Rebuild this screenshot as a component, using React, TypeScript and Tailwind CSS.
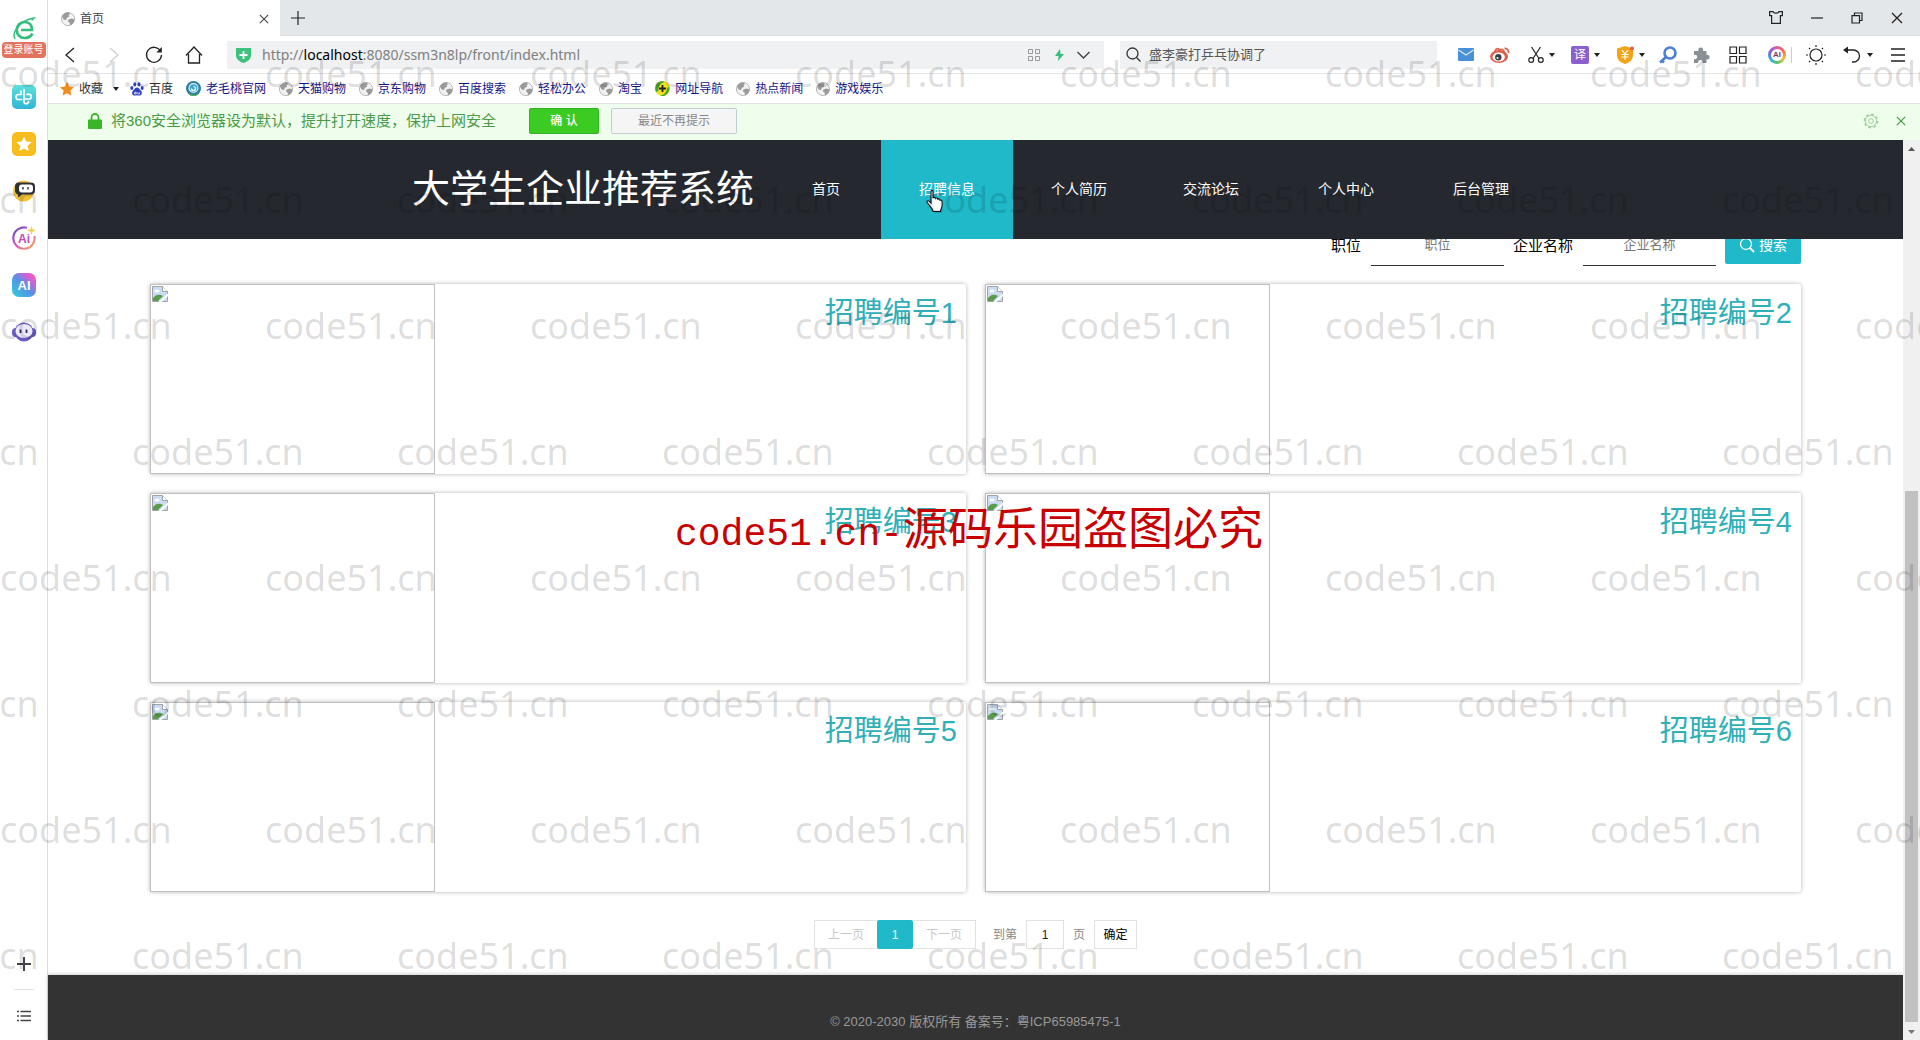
import { useState } from "react";
import type { ReactNode } from "react";

const menus = [["首页"], ["招聘信息", "个人简历", "交流论坛"], ["个人中心"], ["后台管理"]];

const jobs = [1, 2, 3, 4, 5, 6];

const bookmarks = [
  { name: "百度", icon: "paw" },
  { name: "老毛桃官网", icon: "peach" },
  { name: "天猫购物", icon: "globe" },
  { name: "京东购物", icon: "globe" },
  { name: "百度搜索", icon: "globe" },
  { name: "轻松办公", icon: "globe" },
  { name: "淘宝", icon: "globe" },
  { name: "网址导航", icon: "nav" },
  { name: "热点新闻", icon: "globe" },
  { name: "游戏娱乐", icon: "globe" },
];

type IconProps = { w: number; h?: number; box?: string; children: ReactNode };

function Svg({ w, h, box, children }: IconProps) {
  return (
    <svg width={w} height={h ?? w} viewBox={box ?? `0 0 ${w} ${h ?? w}`} fill="none" className="block shrink-0" aria-hidden="true">
      {children}
    </svg>
  );
}

function Globe() {
  return (
    <Svg w={14}>
      <circle cx="7" cy="7" r="6.6" fill="#f2f2f2" stroke="#a8a8a8" strokeWidth=".8" />
      <path d="M1 4.5C2.2 1.8 4.6.6 7.2.5L9 2 7.6 3.4l.6 1.4-2.4 1L5 8 2.6 7.4z" fill="#9a9a9a" />
      <path d="M7.4 7.6l3.4-1 2.6 1c-.2 3-2 5-4.4 5.7L8.6 10.6 7 9.4z" fill="#9a9a9a" />
    </Svg>
  );
}

function BookmarkIcon({ icon }: { icon: string }) {
  if (icon === "paw") {
    return (
      <Svg w={14}>
        <g fill="#2f3fc4">
          <ellipse cx="1.8" cy="6" rx="1.5" ry="2" />
          <ellipse cx="4.8" cy="2.4" rx="1.5" ry="2.1" />
          <ellipse cx="9" cy="2.4" rx="1.5" ry="2.1" />
          <ellipse cx="12.2" cy="6" rx="1.5" ry="2" />
          <path d="M7 5.6c1.8 0 2.4 1.8 3.8 3 1.6 1.4 1.4 4.8-1 5-1.2.1-1.8-.4-2.8-.4s-1.6.5-2.8.4c-2.4-.2-2.6-3.6-1-5C4.6 7.4 5.2 5.6 7 5.600z" />
        </g>
        <path d="M4.6 10.2h1.6v1.8H4.6zM7.8 10.2v1.8h1.8v-1.8" stroke="#fff" strokeWidth=".7" />
      </Svg>
    );
  }
  if (icon === "peach") {
    return (
      <Svg w={15}>
        <circle cx="7.5" cy="7.5" r="7.5" fill="#2a7fa0" />
        <circle cx="7.5" cy="7" r="4.4" fill="#3fa3c4" stroke="#d3eff6" strokeWidth="1.3" />
        <path d="M5.5 7.500a2 2 0 1 0 2-2" stroke="#fff" strokeWidth="1.2" />
        <path d="M3 13c2.400 1.800 6.600 1.800 9 0" stroke="#4fae5a" strokeWidth="1.4" />
      </Svg>
    );
  }
  if (icon === "nav") {
    return (
      <Svg w={15}>
        <circle cx="7.5" cy="7.5" r="7.5" fill="#f3df1e" />
        <path d="M1 11A7.5 7.5 0 0 1 7 0l3 1C5 2 3 6 3.5 10zM14 5a7.500 7.500 0 0 1-7 10l-2-.6c4-.4 6.5-3 7-7z" fill="#46a52c" />
        <path d="M7.5 4v7M4 7.5h7" stroke="#222" strokeWidth="1.8" />
      </Svg>
    );
  }
  return <Globe />;
}

function Caret() {
  return (
    <Svg w={6} h={4}>
      <path d="M0 0h6L3 4z" fill="#222" />
    </Svg>
  );
}

function Cross({ size, color }: { size: number; color: string }) {
  return (
    <Svg w={size} box="0 0 12 12">
      <path d="M1 1l10 10M11 1L1 11" stroke={color} strokeWidth="1.3" />
    </Svg>
  );
}

function BrokenImage() {
  return (
    <svg width="16" height="16" viewBox="0 0 16 16" className="m-px block" aria-hidden="true">
      <path d="M.5.5h10l5 5v10H.5z" fill="#c9dcf4" stroke="#a0a4a8" />
      <path d="M10.5.5v5h5" fill="#fff" stroke="#a0a4a8" />
      <ellipse cx="5" cy="5" rx="2.6" ry="1.5" fill="#fff" />
      <path d="M1 15v-3c2-3 5-4 8-3l2 1-5 5z" fill="#5a9c4c" />
      <path d="M6.5 16L16 7.5V10L9.5 16z" fill="#fff" />
    </svg>
  );
}

function Sidebar() {
  return (
    <aside className="flex w-12 shrink-0 flex-col items-center border-r border-[#dcdfe1] bg-white pt-4">
      <Svg w={24}>
        <path d="M20.500 17.500C19 20.300 16.200 22 12.800 22 8 22 4.800 18.600 4.800 14S8.200 6 12.800 6c4.400 0 7.400 3.200 7.200 8H9" stroke="#35bd7c" strokeWidth="2.700" />
        <path d="M3 23C-.5 17 7 4.500 22 2c-1 .8-1.500 1.400-2 2.500" stroke="#35bd7c" strokeWidth="1.500" />
      </Svg>
      <button className="mt-[2px] h-4 w-11 rounded-sm bg-[#e2735c] text-[10px] leading-4 text-white">登录账号</button>
      <nav className="mt-[27px] flex flex-col gap-[23px]" aria-label="侧栏">
        <Svg w={24}>
          <defs>
            <linearGradient id="sky" x1="0" y1="0" x2="0" y2="1">
              <stop stopColor="#5fe0dc" />
              <stop offset="1" stopColor="#2eb4d8" />
            </linearGradient>
            <linearGradient id="ring" x1="0" y1="0" x2="1" y2="1">
              <stop stopColor="#5e4fc4" />
              <stop offset=".5" stopColor="#d658c8" />
              <stop offset="1" stopColor="#f5b84a" />
            </linearGradient>
            <linearGradient id="mix" x1="0" y1="1" x2="1" y2="0">
              <stop stopColor="#2fd0dc" />
              <stop offset=".5" stopColor="#5a8fe6" />
              <stop offset=".8" stopColor="#e25bd0" />
              <stop offset="1" stopColor="#ff5ba8" />
            </linearGradient>
          </defs>
          <rect width="24" height="24" rx="5" fill="url(#sky)" />
          <path d="M12 4.500v12c0 3 4.500 3 4.500 0M9.500 14.500H6.500a2.500 2.500 0 0 1 0-5H9M12 14h5a2.300 2.300 0 0 0 0-4.600h-2M9 6v3.500" stroke="#fff" strokeWidth="1.700" strokeLinecap="round" />
        </Svg>
        <Svg w={24}>
          <rect width="24" height="24" rx="5" fill="#f6bd1c" />
          <path d="M12 4.5l2.3 5 5.4.6-4 3.7 1.1 5.3L12 16.4l-4.8 2.7 1.1-5.3-4-3.7 5.4-.6z" fill="#fff" />
        </Svg>
        <Svg w={24}>
          <circle cx="11.5" cy="12" r="10.5" fill="#f3c034" />
          <path d="M6 3.500h13a4 4 0 0 1 4 4v4a4 4 0 0 1-4 4h-9l-4 3v-3a4 4 0 0 1-3-4v-4a4 4 0 0 1 3-4z" fill="#2e3138" />
          <rect x="7" y="5.5" width="14" height="8" rx="3" fill="#fff" />
          <path d="M11 8v2.5M16 8v2.5" stroke="#2e3138" strokeWidth="1.4" />
        </Svg>
        <Svg w={24}>
          <path d="M15 1.8A10.7 10.7 0 1 0 22.5 10" stroke="url(#ring)" strokeWidth="2.2" />
          <path d="M19.5 0l1.2 3.3L24 4.500l-3.300 1.200L19.500 9l-1.200-3.300L15 4.500l3.300-1.200z" fill="#f4cf58" />
          <text x="12" y="16.5" textAnchor="middle" fontSize="12" fontWeight="700" fill="#c24bb0" fontFamily="Liberation Sans, sans-serif">Ai</text>
        </Svg>
        <Svg w={24}>
          <rect width="24" height="24" rx="7" fill="url(#mix)" />
          <text x="12" y="16.5" textAnchor="middle" fontSize="13" fontWeight="700" fill="#fff" fontFamily="Liberation Sans, sans-serif">AI</text>
        </Svg>
        <Svg w={24}>
          <circle cx="12" cy="12" r="9.5" fill="#6a5bc4" />
          <rect x="0" y="8" width="24" height="9" rx="4" fill="#6a5bc4" />
          <ellipse cx="12" cy="11" rx="8.5" ry="7" fill="#eeeafc" />
          <path d="M8.5 9.5v3.5M14.5 9.5v3.5" stroke="#33305a" strokeWidth="1.8" />
        </Svg>
      </nav>
      <div className="mt-auto flex flex-col items-center pb-[18px]">
        <Svg w={14}>
          <path d="M7 0v14M0 7h14" stroke="#444" strokeWidth="2" />
        </Svg>
        <hr className="mt-[18px] w-5 border-[#e2e2e2]" />
        <div className="mt-5">
          <Svg w={14} h={12}>
            <path d="M3.5 1.5H14M3.5 6H14M3.5 10.5H14M0 1.5h2M0 6h2M0 10.5h2" stroke="#444" strokeWidth="1.6" />
          </Svg>
        </div>
      </div>
    </aside>
  );
}

function TabStrip() {
  return (
    <div className="flex h-9 items-center border-b border-[#dcdfe1] bg-[#e3e7ea]">
      <div className="flex h-9 w-[232px] items-center bg-white pt-[2px] pr-[11px] pl-[13px] text-xs text-[#444]">
        <Globe />
        <span className="ml-[5px]">首页</span>
        <button className="ml-auto" aria-label="关闭标签">
          <Cross size={10} color="#444" />
        </button>
      </div>
      <button className="ml-[11px]" aria-label="新标签">
        <Svg w={14}>
          <path d="M7 0v14M0 7h14" stroke="#222" strokeWidth="1.2" />
        </Svg>
      </button>
      <div className="ml-auto flex items-center gap-7 pr-[17px]">
        <Svg w={14} h={13}>
          <path d="M.6.6h3.400c.5 2 5.500 2 6 0h3.400v4h-2v7.800H2.600V4.600h-2z" stroke="#222" strokeWidth="1.2" />
        </Svg>
        <Svg w={12}>
          <path d="M0 6h12" stroke="#222" strokeWidth="1.2" />
        </Svg>
        <Svg w={12}>
          <path d="M1 3.600h7.500V11H1zM3.500 3.600V1H11v7.500H8.500" stroke="#222" strokeWidth="1.2" />
        </Svg>
        <Cross size={12} color="#222" />
      </div>
    </div>
  );
}

function ToolIcons() {
  return (
    <div className="flex items-center pr-[14px] pl-[21px]">
      <Svg w={16} h={13}>
        <rect width="16" height="13" rx="1" fill="#4a90d9" />
        <path d="M.5 2L8 7l7.5-5" stroke="#d8e9fa" strokeWidth="1.3" />
      </Svg>
      <div className="ml-4">
        <Svg w={20} h={16}>
          <ellipse cx="9" cy="9.5" rx="9" ry="6.5" fill="#dd5f4b" />
          <ellipse cx="8.7" cy="10" rx="6.2" ry="4.5" fill="#fff" />
          <circle cx="8.3" cy="10.3" r="3.2" fill="#3a3f45" />
          <circle cx="7.5" cy="11" r="1" fill="#fff" />
          <path d="M5 4c1-3 4-3 4-1 2-1 5-1 5 2M14.5 1.5c2.5-.5 4.5 2 4 4.5" stroke="#dd5f4b" strokeWidth="1.8" />
        </Svg>
      </div>
      <div className="ml-[18px]">
        <Svg w={16}>
          <path d="M3.5 0l7.5 11.5M12.5 0L5 11.5" stroke="#222" strokeWidth="1.2" />
          <circle cx="3.2" cy="13" r="2.4" stroke="#222" strokeWidth="1.2" />
          <circle cx="12.8" cy="13" r="2.4" stroke="#222" strokeWidth="1.2" />
        </Svg>
      </div>
      <div className="ml-[5px]"><Caret /></div>
      <span className="ml-4 h-[18px] w-[18px] rounded-xs bg-[#8b5fd0] text-center text-xs leading-[18px] text-white">译</span>
      <div className="ml-[5px]"><Caret /></div>
      <div className="ml-4">
        <Svg w={18}>
          <path d="M9 0l8 2.5V9c0 4.500-3 7.500-8 9-5-1.500-8-4.500-8-9V2.500z" fill="#f2a516" />
          <path d="M6 4l3 4 3-4M5.500 8.500h7M5.500 11h7M9 8v6" stroke="#fff" strokeWidth="1.2" />
          <circle cx="16" cy="2.500" r="2" fill="#e8584a" />
        </Svg>
      </div>
      <div className="ml-[5px]"><Caret /></div>
      <div className="ml-[14px]">
        <Svg w={18}>
          <circle cx="11" cy="7" r="5.5" stroke="#4a80d8" strokeWidth="2.6" />
          <path d="M7 11l-6 5.5M3 14.500l2 2" stroke="#4a80d8" strokeWidth="2.6" />
        </Svg>
      </div>
      <div className="ml-4">
        <Svg w={18}>
          <path d="M1 5h4.500a2.500 2.500 0 1 1 4.500 0H13.500v4a2.300 2.300 0 1 1 0 4.300V17h-4a2.300 2.300 0 1 0-4.300 0H1v-4.200a2.200 2.200 0 1 0 0-3.800z" fill="#8a8f94" />
        </Svg>
      </div>
      <div className="ml-[18px]">
        <Svg w={18}>
          <path d="M1 1h6.500v6.500H1zM10.500 1H17v6.500h-6.500zM1 10.500h6.500V17H1zM10.500 10.500H17V17h-6.500z" stroke="#222" strokeWidth="1.2" />
        </Svg>
      </div>
      <span className="ml-[21px] flex h-[18px] w-[18px] items-center justify-center rounded-full bg-[conic-gradient(#e35aa8,#f2704a,#f2c23a,#4cc46a,#3aa8e8,#8a5ae0,#e35aa8)]">
        <span className="h-3 w-3 rounded-full bg-white text-center text-[8px] leading-3 font-bold text-[#7a3a6a]">AI</span>
      </span>
      <span className="ml-[5px] h-4 w-px bg-[#ccc]" />
      <div className="ml-[14px]">
        <Svg w={20}>
          <circle cx="10" cy="10" r="6" stroke="#222" strokeWidth="1.2" />
          <path d="M10 0v2M10 18v2M0 10h2M18 10h2M3 3l1.200 1.200M15.800 15.800L17 17M17 3l-1.200 1.200M3 17l1.200-1.200" stroke="#222" strokeWidth="1.2" />
        </Svg>
      </div>
      <div className="ml-[17px]">
        <Svg w={18}>
          <path d="M3 4h7.500a6 6 0 0 1 0 12H9" stroke="#222" strokeWidth="1.3" />
          <path d="M0 4l5-3.500v7z" fill="#222" />
        </Svg>
      </div>
      <div className="ml-[6px]"><Caret /></div>
      <div className="ml-[17px]">
        <Svg w={16} h={14}>
          <path d="M1 1h14M1 7h14M1 13h14" stroke="#222" strokeWidth="1.3" />
        </Svg>
      </div>
    </div>
  );
}

function AddressBar() {
  return (
    <div className="flex h-[38px] items-center border-b border-[#e6e6e6] bg-white pl-[15px]">
      <Svg w={14} h={16}>
        <path d="M11 1L3 8l8 7" stroke="#222" strokeWidth="1.3" />
      </Svg>
      <div className="ml-[30px]">
        <Svg w={14} h={16}>
          <path d="M3 1l8 7-8 7" stroke="#d0d0d0" strokeWidth="1.3" />
        </Svg>
      </div>
      <div className="ml-6">
        <Svg w={18}>
          <path d="M15.500 5A7.500 7.500 0 1 0 16.500 9" stroke="#222" strokeWidth="1.3" />
          <path d="M16.800 1v5.500h-5.500z" fill="#222" />
        </Svg>
      </div>
      <div className="ml-[22px]">
        <Svg w={18}>
          <path d="M1 9.500L9 1l8 8.500M3.500 8v9h11V8" stroke="#222" strokeWidth="1.3" />
        </Svg>
      </div>
      <div className="ml-6 flex h-7 flex-1 items-center bg-[#eff1f2] pr-[14px] pl-[9px]">
        <Svg w={15} h={16}>
          <path d="M0 1h15v7c0 4-3 6.500-7.500 8C3 14.500 0 12 0 8z" fill="#3dc17f" />
          <path d="M7.500 4v8M3.500 8h8" stroke="#fff" strokeWidth="1.8" />
        </Svg>
        <div className="ml-[11px] flex-1 font-['Noto_Sans',sans-serif] text-sm text-[#808080]">
          http://<span className="text-black">localhost</span>:8080/ssm3n8lp/front/index.html
        </div>
        <Svg w={12}>
          <path d="M.5.5h4v4h-4zM7.500.5h4v4h-4zM.5 7.500h4v4h-4zM7.500 7.500h4v4h-4z" stroke="#999" />
        </Svg>
        <div className="ml-[15px]">
          <Svg w={9} h={12}>
            <path d="M5 0L0 7h3.500L3 12l6-7H5.500z" fill="#35bd7c" />
          </Svg>
        </div>
        <div className="ml-[13px]">
          <Svg w={13} h={8}>
            <path d="M.5 1l6 6 6-6" stroke="#444" strokeWidth="1.4" />
          </Svg>
        </div>
      </div>
      <div className="ml-4 flex h-7 w-[317px] items-center gap-2 bg-[#eff1f2] pl-[6px]">
        <Svg w={15}>
          <circle cx="6.5" cy="6.5" r="5.5" stroke="#333" strokeWidth="1.3" />
          <path d="M10.500 10.500l4 4" stroke="#333" strokeWidth="1.3" />
        </Svg>
        <input aria-label="搜索" defaultValue="盛李豪打乒乓协调了" className="w-60 bg-transparent text-[13px] text-[#555] outline-none" />
      </div>
      <ToolIcons />
    </div>
  );
}

function Bookmarks() {
  return (
    <div className="flex h-[30px] items-center border-b border-[#dfe5dc] bg-white pl-3 text-xs">
      <Svg w={14}>
        <path d="M7 0l2.100 4.600 4.900.6-3.600 3.400.9 5L7 11.200l-4.300 2.400.9-5L0 5.200l4.900-.6z" fill="#f08c1a" />
      </Svg>
      <span className="ml-[5px] text-[#333]">收藏</span>
      <div className="mr-[11px] ml-[10px]"><Caret /></div>
      <div className="flex gap-[13px]">
        {bookmarks.map((b, i) => (
          <a key={b.name} href="#" className={i === 0 ? "flex items-center gap-[5px] text-[#333]" : "flex items-center gap-[5px] text-[#15158a]"}>
            <BookmarkIcon icon={b.icon} />
            {b.name}
          </a>
        ))}
      </div>
    </div>
  );
}

function DefaultNotice() {
  return (
    <div className="flex h-9 items-center bg-[#effeec] pr-[14px] pb-[2px] pl-10">
      <Svg w={14} h={16}>
        <path d="M3.500 7V4.500a3.500 3.500 0 0 1 7 0V7" stroke="#39b528" strokeWidth="1.8" />
        <rect y="6.5" width="14" height="9.5" rx="1" fill="#39b528" />
      </Svg>
      <span className="ml-[9px] text-[15px] text-[#4a9a48]">将360安全浏览器设为默认，提升打开速度，保护上网安全</span>
      <button className="ml-[33px] h-[26px] w-[70px] rounded-xs border border-[#35b325] bg-[#3ccb22] text-xs font-medium text-white">确 认</button>
      <button className="ml-3 h-[26px] w-[126px] rounded-xs border border-[#c5cad0] bg-[#f5f5f5] text-xs text-[#888]">最近不再提示</button>
      <div className="ml-auto flex items-center gap-[17px]">
        <Svg w={16}>
          <circle cx="8" cy="8" r="6.700" stroke="#9dcb98" strokeWidth="1.400" strokeDasharray="2.600 2.660" />
          <circle cx="8" cy="8" r="5.600" stroke="#9dcb98" strokeWidth=".9" />
          <circle cx="8" cy="8" r="2.400" stroke="#9dcb98" strokeWidth=".9" />
        </Svg>
        <button aria-label="关闭提示">
          <Cross size={10} color="#3f9a3c" />
        </button>
      </div>
    </div>
  );
}

function HandCursor() {
  return (
    <svg width="18" height="22" viewBox="0 0 18 22" className="absolute top-[50px] left-[45px]" aria-hidden="true">
      <path d="M5 1.500c0-1.300 2-1.300 2 0V8c.5-1 2.300-.8 2.400.5.800-.9 2.300-.5 2.400.7.900-.7 2.300-.2 2.300 1.100 1-.5 2 .2 2 1.400v3.500c0 3-1.600 3.800-1.600 6.300H7.200C6.800 18.500 4 16.500 1.200 12.500c-.7-1.300.8-2.300 2-1.200L5 13z" fill="#fff" stroke="#111" strokeWidth="1.1" />
    </svg>
  );
}

function SiteHeader() {
  return (
    <header className="relative z-10 flex h-[99px] items-center bg-[#25282f] pl-[364px] text-white">
      <h1 className="pb-[2px] text-[38px] leading-none whitespace-nowrap">大学生企业推荐系统</h1>
      <nav className="ml-5 flex gap-[3px] text-sm">
        {menus.map((group) => (
          <div key={group[0]} className="flex">
            {group.map((item) => (
              <a
                key={item}
                href="#"
                className={
                  item === "招聘信息"
                    ? "relative flex h-[99px] items-center bg-[#1fb9c9] px-[38px] pb-[2px] whitespace-nowrap"
                    : "flex h-[99px] items-center px-[38px] pb-[2px] whitespace-nowrap"
                }
              >
                {item}
                {item === "招聘信息" && <HandCursor />}
              </a>
            ))}
          </div>
        ))}
      </nav>
    </header>
  );
}

function SearchForm() {
  const field = "h-10 w-[133px] border-b border-[#333] pb-[3px] text-center text-[13px] text-[#333] outline-none placeholder:text-[#777]";
  return (
    <form className="-mt-[13px] flex items-start justify-end gap-[9px] text-[15px] text-black" onSubmit={(e) => e.preventDefault()}>
      <label className="flex items-center gap-[10px]">
        职位
        <input placeholder="职位" className={field} />
      </label>
      <label className="flex items-center gap-[10px]">
        企业名称
        <input placeholder="企业名称" className={field} />
      </label>
      <button className="flex h-[38px] w-[76px] items-center justify-center gap-1 rounded-xs bg-[#1fb9c9] text-sm text-white">
        <Svg w={16}>
          <circle cx="7" cy="7" r="5.5" stroke="#fff" strokeWidth="1.3" />
          <path d="M11 11l4 4" stroke="#fff" strokeWidth="1.8" />
        </Svg>
        搜索
      </button>
    </form>
  );
}

function Pager() {
  const [page, setPage] = useState("1");
  const cell = "h-[29px] border border-[#e2e2e2] bg-white";
  return (
    <div className="mt-7 flex items-center justify-center text-xs text-[#888]">
      <button className={`${cell} w-[63px] border-r-0 text-[#c8c8c8]`}>上一页</button>
      <button className="h-[29px] w-9 rounded-xs bg-[#1fb9c9] text-white">1</button>
      <button className={`${cell} w-[63px] border-l-0 text-[#c8c8c8]`}>下一页</button>
      <label className="ml-[17px] flex items-center gap-[9px]">
        到第
        <input value={page} onChange={(e) => setPage(e.target.value)} className={`${cell} w-[38px] text-center text-[#222]`} />
      </label>
      <span className="ml-[9px]">页</span>
      <button className={`${cell} ml-[9px] w-[43px] text-black`}>确定</button>
    </div>
  );
}

function Scrollbar() {
  return (
    <div className="flex w-[17px] shrink-0 flex-col items-center bg-[#f0f0f0] pt-[7px] pb-[6px]">
      <Svg w={7} h={4}>
        <path d="M0 4h7L3.500 0z" fill="#555" />
      </Svg>
      <div className="flex-[342]" />
      <div className="w-[13px] flex-[535] bg-[#c1c1c1]" />
      <div className="mt-2">
        <Svg w={7} h={4}>
          <path d="M0 0h7L3.500 4z" fill="#777" />
        </Svg>
      </div>
    </div>
  );
}

function Watermark() {
  return (
    <div className="pointer-events-none absolute inset-0 z-20 overflow-hidden pt-[11px]">
      {[0, 1, 2, 3, 4, 5, 6, 7].map((row) => (
        <div
          key={row}
          className={
            row % 2
              ? "-ml-[133px] flex h-[126px] items-center font-['Noto_Sans',sans-serif] text-4xl text-black/14"
              : "flex h-[126px] items-center font-['Noto_Sans',sans-serif] text-4xl text-black/14"
          }
        >
          {[0, 1, 2, 3, 4, 5, 6, 7].map((n) => (
            <span key={n} className="w-[265px] shrink-0">code51.cn</span>
          ))}
        </div>
      ))}
      <p className="absolute top-[502px] left-[675px] font-['Liberation_Mono','Noto_Sans_CJK_SC',monospace] text-[38px] leading-[64px] whitespace-nowrap text-[#c80000]">
        code51.cn-<span className="text-[45px]">源码乐园盗图必究</span>
      </p>
    </div>
  );
}

export default function App() {
  return (
    <div className="relative flex min-h-screen bg-white font-['Liberation_Sans','Noto_Sans_CJK_SC',sans-serif]">
      <Sidebar />
      <div className="flex min-w-0 flex-1 flex-col">
        <TabStrip />
        <AddressBar />
        <Bookmarks />
        <DefaultNotice />
        <div className="flex flex-1">
          <div className="flex min-w-0 flex-1 flex-col">
            <SiteHeader />
            <main className="px-[102px] pb-[26px]">
              <SearchForm />
              <div className="mt-[18px] grid grid-cols-2 gap-[19px]">
                {jobs.map((id) => (
                  <article key={id} className="flex h-[190px] justify-between rounded-xs shadow-[0_0_4px_rgba(0,0,0,0.3)]">
                    <div className="w-[285px] border border-[#c0c0c0]">
                      <BrokenImage />
                    </div>
                    <h2 className="pt-[9px] pr-[9px] text-[29px] leading-10 text-[#30afb8]">招聘编号{id}</h2>
                  </article>
                ))}
              </div>
              <Pager />
            </main>
            <footer className="flex-1 bg-[#333] pt-[37px] text-center text-[13px] leading-5 text-[#999] shadow-[0_-1px_4px_rgba(0,0,0,0.2)]">
              © 2020-2030 版权所有 备案号：粤ICP65985475-1
            </footer>
          </div>
          <Scrollbar />
        </div>
      </div>
      <Watermark />
    </div>
  );
}
